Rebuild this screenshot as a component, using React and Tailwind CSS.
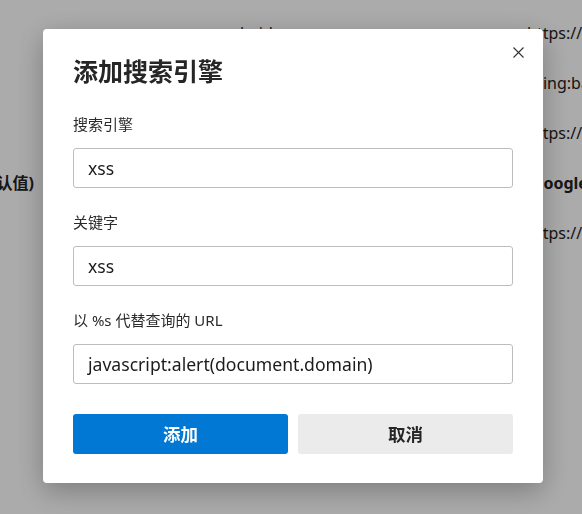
const rows = [
  { name: "百度", key: "baidu", url: "https://www.baidu.com/s?wd=%s" },
  { name: "必应", key: "bing", url: "{bing:baseURL}search?q=%s" },
  { name: "雅虎", key: "yahoo", url: "https://search.yahoo.com/search?p=%s" },
  { name: "Google (默认值)", key: "google", url: "{google:baseURL}search?q=%s", bold: true },
  { name: "搜狗", key: "sogou", url: "https://www.sogou.com/web?query=%s" },
];

function Field({ label, value, first }) {
  return (
    <div className={first ? "mt-[27px]" : "mt-[24px]"}>
      <div className="text-[15px] leading-[20px] text-[#2b2b2b]">{label}</div>
      <div className="mt-[14px] h-[40px] rounded-[3px] border border-[#bdbdbd] px-[14px] flex items-center text-[17.6px] text-[#1b1b1b] whitespace-nowrap overflow-hidden">
        {value}
      </div>
    </div>
  );
}

export default function App() {
  return (
    <div className="relative w-full h-[514px] overflow-hidden bg-white font-['Noto_Sans','Noto_Sans_CJK_SC',sans-serif]">
      {/* page behind the dialog */}
      <div className="pt-[8px] text-[16px] text-[#222]">
        {rows.map((r) => (
          <div key={r.key} className={`flex h-[50px] items-center ${r.bold ? "font-bold" : ""}`}>
            <div className="w-[34px] shrink-0 flex justify-end">
              <div className="w-[119px] shrink-0 whitespace-nowrap">{r.name}</div>
            </div>
            <div className="w-[493px] shrink-0 pl-[206px] whitespace-nowrap">{r.key}</div>
            <div className="whitespace-nowrap">{r.url}</div>
          </div>
        ))}
      </div>

      {/* overlay */}
      <div className="fixed inset-0 bg-black/[0.33] flex items-center justify-center pl-[4px] pb-[2px]">
        <div className="relative w-[500px] rounded-[4px] bg-white pt-[26px] px-[30px] pb-[29px] shadow-[0_8px_28px_rgba(0,0,0,0.28)]">
          <button className="absolute right-[19px] top-[18px] w-[11px] h-[11px]" title="关闭">
            <svg width="11" height="11" viewBox="0 0 11 11" fill="none" stroke="#333" strokeWidth="1.1">
              <path d="M0.5 0.5L10.5 10.5M10.5 0.5L0.5 10.5" />
            </svg>
          </button>

          <h1 className="text-[25px] leading-[32px] font-bold text-[#262626]">添加搜索引擎</h1>

          <Field first label="搜索引擎" value="xss" />
          <Field label="关键字" value="xss" />
          <Field label="以 %s 代替查询的 URL" value="javascript:alert(document.domain)" />

          <div className="mt-[30px] flex gap-[10px]">
            <button className="flex-1 h-[40px] rounded-[3px] bg-[#0078d4] text-white text-[17.5px] font-bold">
              添加
            </button>
            <button className="flex-1 h-[40px] rounded-[3px] bg-[#ebebeb] text-[#262626] text-[17.5px] font-bold">
              取消
            </button>
          </div>
        </div>
      </div>
    </div>
  );
}
